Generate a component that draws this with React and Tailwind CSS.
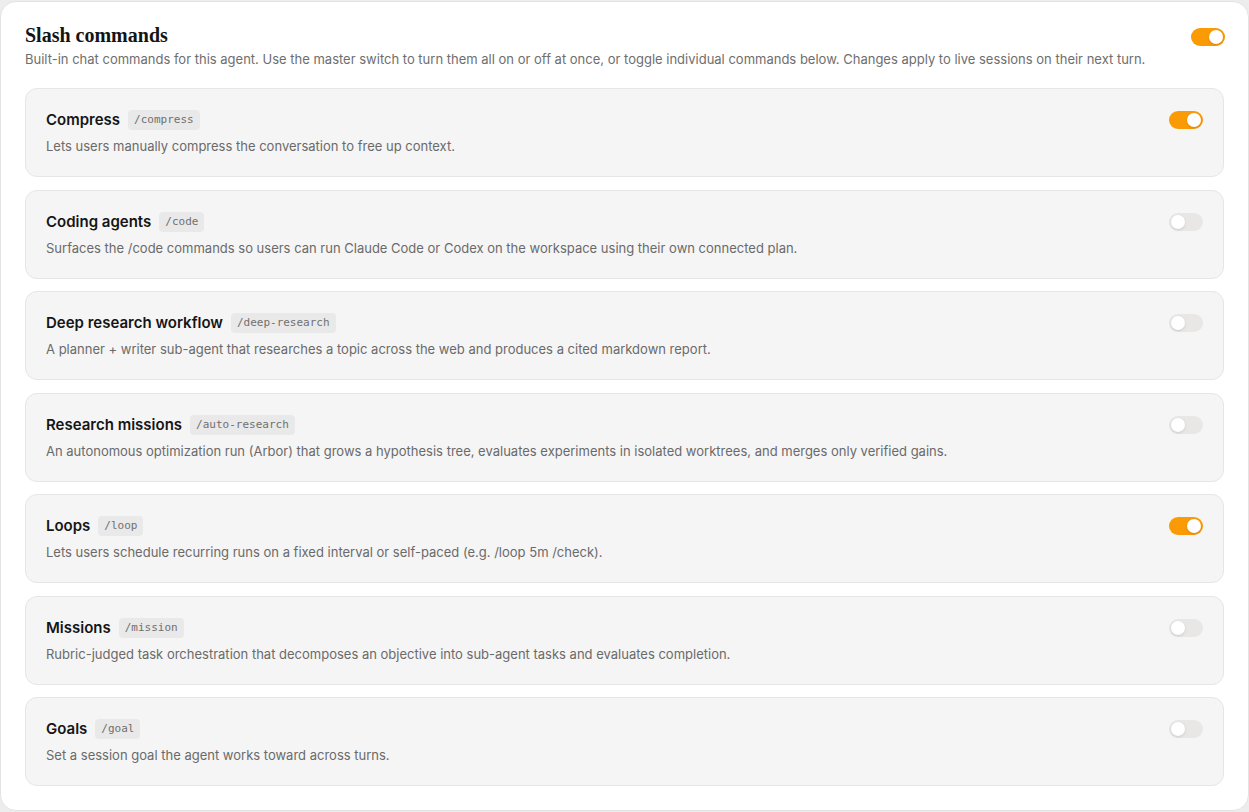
const commands = [
  {
    name: "Compress",
    cmd: "/compress",
    desc: "Lets users manually compress the conversation to free up context.",
    on: true,
  },
  {
    name: "Coding agents",
    cmd: "/code",
    desc: "Surfaces the /code commands so users can run Claude Code or Codex on the workspace using their own connected plan.",
    on: false,
  },
  {
    name: "Deep research workflow",
    cmd: "/deep-research",
    desc: "A planner + writer sub-agent that researches a topic across the web and produces a cited markdown report.",
    on: false,
  },
  {
    name: "Research missions",
    cmd: "/auto-research",
    desc: "An autonomous optimization run (Arbor) that grows a hypothesis tree, evaluates experiments in isolated worktrees, and merges only verified gains.",
    on: false,
  },
  {
    name: "Loops",
    cmd: "/loop",
    desc: "Lets users schedule recurring runs on a fixed interval or self-paced (e.g. /loop 5m /check).",
    on: true,
  },
  {
    name: "Missions",
    cmd: "/mission",
    desc: "Rubric-judged task orchestration that decomposes an objective into sub-agent tasks and evaluates completion.",
    on: false,
  },
  {
    name: "Goals",
    cmd: "/goal",
    desc: "Set a session goal the agent works toward across turns.",
    on: false,
  },
]

function Toggle({ on }) {
  return (
    <div
      className={`flex h-[18px] w-[34px] shrink-0 items-center rounded-full p-[2px] ${
        on ? "justify-end bg-[#fa9a05]" : "justify-start bg-[#e9e7e6]"
      }`}
    >
      <div className="h-[14px] w-[14px] rounded-full bg-white shadow-sm" />
    </div>
  )
}

export default function App() {
  return (
    <div
      className="min-h-[812px] bg-[#ededed] pt-px"
      style={{ fontFamily: "Inter, 'Noto Sans', sans-serif" }}
    >
      <div className="rounded-2xl border border-[#e3e3e3] bg-white px-6 pb-6 pt-5">
        <div className="flex items-start justify-between">
          <div>
            <h2 className="font-['Liberation_Serif',serif] text-[20px] font-bold leading-[26px] text-[#141414]">
              Slash commands
            </h2>
            <p className="mt-px text-[13px] leading-5 text-[#6e6e6e]">
              Built-in chat commands for this agent. Use the master switch to turn them all on or off at once, or toggle individual commands below. Changes apply to live sessions on their next turn.
            </p>
          </div>
          <div className="-mr-px pt-[6px]">
            <Toggle on />
          </div>
        </div>

        <div className="mt-[19px] flex flex-col gap-[12.5px]">
          {commands.map((c) => (
            <div
              key={c.cmd}
              className="flex items-start justify-between rounded-xl border border-[#e6e6e6] bg-[#f5f5f5] px-5 py-5"
            >
              <div>
                <div className="flex items-center gap-2">
                  <span className="text-[15px] font-semibold leading-[22px] text-[#151515]">
                    {c.name}
                  </span>
                  <span className="rounded bg-[#e9e9e9] px-[6px] py-[2px] font-['DejaVu_Sans_Mono',monospace] text-[11px] leading-4 text-[#707070]">
                    {c.cmd}
                  </span>
                </div>
                <p className="mt-[5px] text-[13px] leading-5 text-[#6a6a6a]">
                  {c.desc}
                </p>
              </div>
              <div className="pt-[2px]">
                <Toggle on={c.on} />
              </div>
            </div>
          ))}
        </div>
      </div>
    </div>
  )
}
